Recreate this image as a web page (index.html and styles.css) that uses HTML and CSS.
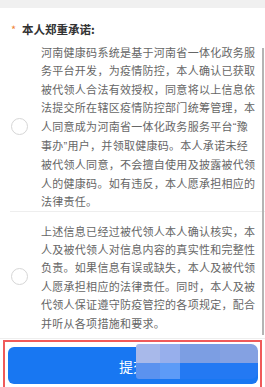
FILE: index.html
```html
<!DOCTYPE html>
<html lang="zh-CN">
<head>
    <meta charset="UTF-8">
    <meta name="viewport" content="width=device-width, initial-scale=1.0">
    <title>本人郑重承诺</title>
    <link rel="stylesheet" href="styles.css">
</head>
<body>
    <div class="topbar"></div>

    <div class="card">
        <div class="title"><span class="star">*</span>本人郑重承诺:</div>

        <label class="item">
            <span class="radio"></span>
            <p>河南健康码系统是基于河南省一体化政务服务平台开发，为疫情防控，本人确认已获取被代领人合法有效授权，同意将以上信息依法提交所在辖区疫情防控部门统筹管理，本人同意成为河南省一体化政务服务平台<span class="q">“</span>豫事办<span class="q">”</span>用户，并领取健康码。本人承诺未经被代领人同意，不会擅自使用及披露被代领人的健康码。如有违反，本人愿承担相应的法律责任。</p>
        </label>

        <label class="item last">
            <span class="radio"></span>
            <p>上述信息已经过被代领人本人确认核实，本人及被代领人对信息内容的真实性和完整性负责。如果信息有误或缺失，本人及被代领人愿承担相应的法律责任。同时，本人及被代领人保证遵守防疫管控的各项规定，配合并听从各项措施和要求。</p>
        </label>
    </div>

    <div class="footer">
        <div class="highlight">
            <button class="submit" type="button">提交
                <span class="mosaic">
                    <i class="m1"></i><i class="m2"></i><i class="m3"></i><i class="m4"></i>
                    <i class="m5"></i><i class="m6"></i><i class="m7"></i><i class="m8"></i>
                </span>
            </button>
        </div>
    </div>

    <!-- barre de défilement -->
    <div class="scrollbar"></div>
</body>
</html>
```

FILE: styles.css
```css
body {
    margin: 0;
    padding: 0;
    background-color: white;
    font-family: "Noto Sans CJK SC", "Noto Sans", sans-serif;
    width: 265px;
    height: 387px;
    overflow: hidden;
    position: relative;
}
.topbar {
    height: 8px;
    background-color: #f0f0f0;
}
.card {
    padding: 12px 0 6px 0;
}
.title {
    display: flex;
    align-items: center;
    height: 18px;
    padding-left: 11px;
    font-size: 11.5px;
    font-weight: bold;
    color: #333;
}
.star {
    color: #f0843a;
    width: 11px;
    font-weight: normal;
    font-size: 11px;
    line-height: 18px;
}
.item {
    display: flex;
    align-items: center;
    gap: 13px;
    margin-left: 10px;
    padding-top: 5px;
    border-bottom: 1px solid #eeeeee;
}
.item.last {
    padding-top: 10px;
    border-bottom: none;
}
.radio {
    flex: none;
    width: 15px;
    height: 15px;
    margin-left: 1px;
    border: 1px solid #d6d6d6;
    border-radius: 50%;
}
.item p {
    margin: 0;
    width: 218px;
    font-size: 11px;
    letter-spacing: 0.28px;
    line-height: 18.4px;
    color: #666;
}
.q {
    font-family: "Liberation Sans", sans-serif;
}
.footer {
    border-top: 1px solid #eeeeee;
    padding-top: 1px;
}
.highlight {
    margin: 0 3px;
    height: 49px;
    box-sizing: border-box;
    border: 2.5px solid #f05a5a;
    border-bottom: none;
    padding: 5px 2px 0 3px;
}
.submit {
    position: relative;
    width: 100%;
    height: 37px;
    border: none;
    border-radius: 6px;
    background-color: #1877f2;
    color: white;
    font-family: inherit;
    font-size: 14px;
    padding: 0;
}
.mosaic {
    position: absolute;
    left: 128px;
    top: -3px;
    width: 122px;
    height: 35px;
    display: grid;
    grid-template-columns: 24px 20px 40px 38px;
    grid-template-rows: 19px 16px;
    border-radius: 3px 7px 7px 3px;
    overflow: hidden;
}
.mosaic i {
    display: block;
}
.m1 { background-color: #a8b9ea; }
.m2 { background-color: #97afec; }
.m3 { background-color: #7c9ee3; }
.m4 { background-color: #84a1e2; }
.m5 { background-color: #5b92ef; }
.m6 { background-color: #5d9bf7; }
.m7 { background-color: #2379f3; }
.m8 { background-color: #2379f3; }

.scrollbar {
    position: absolute;
    right: 1px;
    top: 48px;
    width: 2px;
    height: 287px;
    background-color: #b4b4b4;
}
```
